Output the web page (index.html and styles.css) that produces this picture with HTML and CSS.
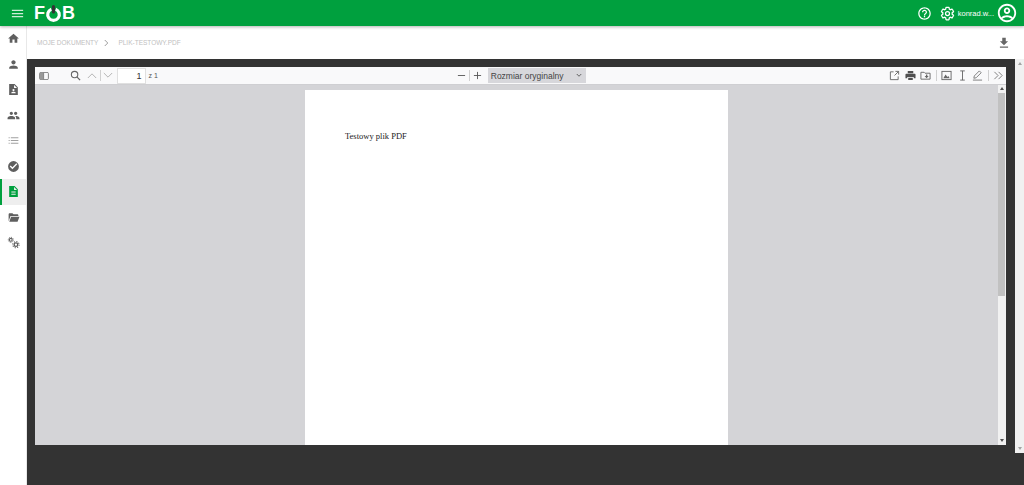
FILE: index.html
```html
<!DOCTYPE html>
<html lang="pl">
  <head>
    <meta charset="UTF-8" />
    <meta name="viewport" content="width=device-width, initial-scale=1.0" />
    <title>FOB</title>
    <link rel="stylesheet" href="styles.css">
  </head>
  <body>
    <header class="topbar">
      <div class="topbar-left">
        <svg class="menu-icon" viewBox="0 0 24 24" width="15" height="15"><path d="M3 18h18v-2H3v2zm0-5h18v-2H3v2zm0-7v2h18V6H3z"/></svg>
        <div class="logo">F<svg class="logo-o" viewBox="0 0 16 18" width="17" height="19"><path class="logo-ring" d="M6 4.9a5.5 5.5 0 1 0 4 0"/><rect class="logo-pin" x="6.5" y="1" width="3" height="8" rx="1.5"/></svg>B</div>
      </div>
      <div class="topbar-right">
        <svg viewBox="0 0 24 24" width="15" height="15"><path d="M11 18h2v-2h-2v2zm1-16C6.48 2 2 6.48 2 12s4.48 10 10 10 10-4.48 10-10S17.52 2 12 2zm0 18c-4.41 0-8-3.59-8-8s3.59-8 8-8 8 3.59 8 8-3.59 8-8 8zm0-14c-2.21 0-4 1.79-4 4h2c0-1.1.9-2 2-2s2 .9 2 2c0 2-3 1.75-3 5h2c0-2.25 3-2.5 3-5 0-2.21-1.79-4-4-4z"/></svg>
        <svg class="gear" viewBox="0 0 24 24" width="15" height="15"><path d="M19.43 12.98c.04-.32.07-.64.07-.98 0-.34-.03-.66-.07-.98l2.11-1.65c.19-.15.24-.42.12-.64l-2-3.46c-.12-.22-.39-.3-.61-.22l-2.49 1c-.52-.4-1.08-.73-1.69-.98l-.38-2.65C14.46 2.18 14.25 2 14 2h-4c-.25 0-.46.18-.49.42l-.38 2.65c-.61.25-1.17.59-1.69.98l-2.49-1c-.23-.09-.49 0-.61.22l-2 3.46c-.13.22-.07.49.12.64l2.11 1.65c-.04.32-.07.65-.07.98 0 .33.03.66.07.98l-2.11 1.65c-.19.15-.24.42-.12.64l2 3.46c.12.22.39.3.61.22l2.49-1c.52.4 1.08.73 1.69.98l.38 2.65c.03.24.24.42.49.42h4c.25 0 .46-.18.49-.42l.38-2.65c.61-.25 1.17-.59 1.69-.98l2.49 1c.23.09.49 0 .61-.22l2-3.46c.12-.22.07-.49-.12-.64l-2.11-1.65z" fill="none" stroke="#fff" stroke-width="2"/><circle cx="12" cy="12" r="3.2" fill="none" stroke="#fff" stroke-width="2"/></svg>
        <span class="user-name">konrad.w...</span>
        <svg viewBox="0 0 24 24" width="22" height="22"><path d="M12 2C6.48 2 2 6.48 2 12s4.48 10 10 10 10-4.48 10-10S17.52 2 12 2zm0 2c4.41 0 8 3.59 8 8 0 1.8-.6 3.46-1.6 4.8-1.5-1.5-4-2.3-6.4-2.3s-4.9.8-6.4 2.3A7.94 7.94 0 0 1 4 12c0-4.41 3.59-8 8-8zm0 2c-1.94 0-3.5 1.56-3.5 3.5S10.06 13 12 13s3.5-1.56 3.5-3.5S13.94 6 12 6zm0 2c.83 0 1.5.67 1.5 1.5S12.83 11 12 11s-1.5-.67-1.5-1.5S11.17 8 12 8zm0 8.5c2 0 3.9.6 5 1.8A7.96 7.96 0 0 1 12 20c-1.9 0-3.7-.7-5-1.7 1.1-1.2 3-1.8 5-1.8z"/></svg>
      </div>
    </header>

    <div class="layout">
      <nav class="sidebar">
        <a class="nav-item"><svg viewBox="0 0 24 24"><path d="M10 20v-6h4v6h5v-8h3L12 3 2 12h3v8z"/></svg></a>
        <a class="nav-item"><svg viewBox="0 0 24 24"><path d="M12 12c2.21 0 4-1.79 4-4s-1.79-4-4-4-4 1.79-4 4 1.79 4 4 4zm0 2c-2.67 0-8 1.34-8 4v2h16v-2c0-2.66-5.33-4-8-4z"/></svg></a>
        <a class="nav-item"><svg viewBox="0 0 24 24"><path fill-rule="evenodd" d="M6 2h8l6 6v14H4V2zm7 1.5V9h5.5zM12 11a2 2 0 1 0 0 4 2 2 0 0 0 0-4zm-4 8h8v-1c0-1.4-2.7-2-4-2s-4 .6-4 2z"/></svg></a>
        <a class="nav-item"><svg viewBox="0 0 24 24"><path d="M16 11c1.66 0 2.99-1.34 2.99-3S17.66 5 16 5s-3 1.34-3 3 1.34 3 3 3zm-8 0c1.66 0 2.99-1.34 2.99-3S9.66 5 8 5 5 6.34 5 8s1.34 3 3 3zm0 2c-2.33 0-7 1.17-7 3.5V19h14v-2.5C15 14.17 10.33 13 8 13zm8 0c-.29 0-.62.02-.97.05 1.16.84 1.97 1.97 1.97 3.45V19h6v-2.5c0-2.33-4.67-3.5-7-3.5z"/></svg></a>
        <a class="nav-item nav-light"><svg viewBox="0 0 24 24"><path d="M3 6h2v2H3zm4 0h14v2H7zM3 11h2v2H3zm4 0h14v2H7zM3 16h2v2H3zm4 0h14v2H7z"/></svg></a>
        <a class="nav-item"><svg viewBox="0 0 24 24"><path fill-rule="evenodd" d="M12 2a10 10 0 1 0 0 20 10 10 0 0 0 0-20zm-2 15-5-5 1.8-1.8L10 13.4l7.200-7.200L19 8z"/></svg></a>
        <a class="nav-item nav-active"><svg viewBox="0 0 24 24"><path fill-rule="evenodd" d="M6 2h8l6 6v14H4V2zm7 1.5V9h5.5zM8 12v2h8v-2zm0 4v2h8v-2z"/></svg></a>
        <a class="nav-item"><svg viewBox="0 0 24 24"><path d="M3 19V6c0-1 .8-2 2-2h5l2 2h7c1 0 2 .8 2 2v1H6.5L3 19zm1.2 1L7.5 10.5H23L19.500 20z"/></svg></a>
        <a class="nav-item"><svg class="nav-gears" viewBox="0 0 24 24"><g fill="none" stroke="#5f5f5f"><circle cx="7" cy="7" r="2.6" stroke-width="2"/><circle cx="7" cy="7" r="4.6" stroke-width="1.8" stroke-dasharray="1.8 1.8"/><circle cx="16.5" cy="16" r="3.3" stroke-width="2.4"/><circle cx="16.5" cy="16" r="5.8" stroke-width="2" stroke-dasharray="2.2 2.35"/></g></svg></a>
      </nav>

      <main class="content">
        <div class="crumbs">
          <div class="crumbs-path">
            <span>MOJE DOKUMENTY</span>
            <svg class="crumb-sep" viewBox="0 0 8 10" width="6" height="8"><path d="M1 1l4 4-4 4" fill="none" stroke="#9a9a9a" stroke-width="1.3"/></svg>
            <span>PLIK-TESTOWY.PDF</span>
          </div>
          <svg class="download" viewBox="0 0 24 24" width="14" height="14"><path d="M19 9h-4V3H9v6H5l7 7 7-7zM5 18v2h14v-2H5z"/></svg>
        </div>

        <div class="viewer-wrap">
          <div class="viewer">
            <div class="toolbar">
              <div class="tb-group">
                <svg class="tb-icon" viewBox="0 0 12 10" width="10" height="8"><rect x=".5" y=".5" width="11" height="9" rx="1.5" fill="none" stroke="#666"/><rect x="1" y="1" width="4" height="8" fill="#999"/><path d="M5.5 1v8" stroke="#666"/></svg>
                <svg class="tb-icon search" viewBox="0 0 12 12" width="11" height="11"><circle cx="5" cy="5" r="3.5" fill="none" stroke="#666" stroke-width="1.2"/><path d="M7.5 7.5l3.5 3.5" stroke="#666" stroke-width="1.4"/></svg>
                <svg class="tb-icon arrow" viewBox="0 0 12 8" width="10" height="7"><path d="M1 7l5-5 5 5" fill="none" stroke="#b5b5b5" stroke-width="1.2"/></svg>
                <span class="tb-sep"></span>
                <svg class="tb-icon" viewBox="0 0 12 8" width="10" height="7"><path d="M1 1l5 5 5-5" fill="none" stroke="#b5b5b5" stroke-width="1.2"/></svg>
                <div class="page-input">1</div>
                <span class="page-count">z 1</span>
              </div>
              <div class="tb-center">
                <svg class="tb-icon" viewBox="0 0 10 10" width="9" height="9"><path d="M1 5h8" stroke="#555" stroke-width="1"/></svg>
                <span class="tb-sep"></span>
                <svg class="tb-icon" viewBox="0 0 10 10" width="9" height="9"><path d="M1 5h8M5 1v8" stroke="#555" stroke-width="1"/></svg>
                <div class="zoom-select">
                  <span>Rozmiar oryginalny</span>
                  <svg viewBox="0 0 8 6" width="6" height="5"><path d="M1 1l3 3 3-3" fill="none" stroke="#555" stroke-width="1.2"/></svg>
                </div>
              </div>
              <div class="tb-group tb-right">
                <svg class="tb-icon" viewBox="0 0 12 12" width="11" height="11"><path d="M5 2H1.5v8.5H10V7M7 1.5h3.5V5M10.500 1.500L6 6" fill="none" stroke="#666" stroke-width="1"/></svg>
                <svg class="tb-icon" viewBox="0 0 12 12" width="11" height="11"><path fill="#505050" d="M3 1h6v2.5H3zM1.5 4h9c.5 0 1 .5 1 1v4H9.5V7.5h-7V9H.5V5c0-.5.5-1 1-1zM3.500 8.500h5V11h-5z"/></svg>
                <svg class="tb-icon" viewBox="0 0 12 12" width="11" height="11"><path fill="none" stroke="#666" stroke-width="1" d="M1 2.5h3.5l1 1H11v6.500H1z"/><path fill="#666" d="M6.5 5h1.5v1.5h1.5L7.200 9 5 6.500h1.500z"/></svg>
                <span class="tb-sep"></span>
                <svg class="tb-icon" viewBox="0 0 12 12" width="11" height="11"><rect x="1" y="1.5" width="10" height="9" fill="none" stroke="#666" stroke-width="1"/><path fill="#666" d="M2.5 9l2.5-4 2 2.5L8 6.5 9.5 9z"/></svg>
                <svg class="tb-icon" viewBox="0 0 12 12" width="11" height="11"><path d="M3.5 1h5M3.5 11h5M6 1v10" fill="none" stroke="#666" stroke-width="1"/></svg>
                <svg class="tb-icon" viewBox="0 0 12 12" width="11" height="11"><path d="M2 9l.5-2.500L8 1l2 2-5.500 5.500zM1 11h10" fill="none" stroke="#777" stroke-width="1"/></svg>
                <span class="tb-sep"></span>
                <svg class="tb-icon" viewBox="0 0 12 12" width="11" height="11"><path d="M1.5 2l4 4-4 4M6 2l4 4-4 4" fill="none" stroke="#777" stroke-width="1"/></svg>
              </div>
            </div>
            <div class="pdf-area">
              <div class="pdf-pages">
                <div class="pdf-page">Testowy plik PDF</div>
              </div>
              <div class="scrollbar inner-scroll">
                <span class="sb-up"></span>
                <span class="sb-thumb"></span>
                <span class="sb-down"></span>
              </div>
            </div>
          </div>
          <div class="scrollbar outer-scroll">
            <span class="sb-up"></span>
            <span class="sb-thumb"></span>
            <span class="sb-down"></span>
          </div>
        </div>
      </main>
    </div>
  </body>
</html>
```

FILE: styles.css
```css
* {
  box-sizing: border-box;
}

html,
body {
  height: 100%;
}

body {
  margin: 0;
  display: flex;
  flex-direction: column;
  overflow: hidden;
  font-family: "Liberation Sans", sans-serif;
  background-color: #fff;
}

.topbar {
  height: 26px;
  flex-shrink: 0;
  display: flex;
  justify-content: space-between;
  align-items: center;
  padding: 0 6px 0 10px;
  background-color: #00a03e;
  box-shadow: 0 1px 3px rgba(0, 0, 0, 0.3);
  position: relative;
  z-index: 2;
}

.topbar svg {
  fill: #fff;
  display: block;
}

.topbar-left {
  display: flex;
  align-items: center;
}

.menu-icon {
  opacity: 0.8;
}

.logo {
  display: flex;
  align-items: center;
  margin-left: 9px;
  color: #fff;
  font-size: 18px;
  font-weight: bold;
  line-height: 1;
}

.logo-ring {
  fill: none;
  stroke: #fff;
  stroke-width: 3;
}

.logo-pin {
  fill: #333;
}

.topbar-right {
  display: flex;
  align-items: center;
}

.gear {
  margin-left: 7.5px;
}

.user-name {
  margin: 0 2px 0 3px;
  color: #fff;
  font-size: 7.5px;
}

.layout {
  flex: 1;
  display: flex;
  min-height: 0;
}

.sidebar {
  width: 27px;
  flex-shrink: 0;
  background-color: #fff;
  border-right: 1px solid #e8e8e8;
}

.nav-item {
  height: 25.5px;
  display: flex;
  align-items: center;
  justify-content: center;
}

.nav-item svg {
  width: 13px;
  height: 13px;
  fill: #5f5f5f;
}

.nav-light svg {
  fill: #a0a0a0;
}

.nav-active {
  background-color: #eeeeee;
  border-left: 2px solid #00a03e;
  padding-right: 2px;
}

.nav-active svg {
  fill: #00a03e;
}

.content {
  flex: 1;
  min-width: 0;
  display: flex;
  flex-direction: column;
}

.crumbs {
  height: 33px;
  flex-shrink: 0;
  display: flex;
  justify-content: space-between;
  align-items: center;
  padding: 0 13px 0 10px;
  font-size: 6.5px;
  color: #c0c0c0;
}

.crumbs-path {
  display: flex;
  align-items: center;
}

.crumb-sep {
  margin: 0 8px 0 6px;
}

.download {
  fill: #666;
}

.viewer-wrap {
  flex: 1;
  min-height: 0;
  display: flex;
  align-items: flex-start;
  padding-left: 8px;
  background-color: #333333;
}

.viewer {
  width: 971px;
  height: 378px;
  margin-top: 8px;
  display: flex;
  flex-direction: column;
  background-color: #d4d4d7;
}

.toolbar {
  height: 17px;
  flex-shrink: 0;
  display: grid;
  grid-template-columns: 1fr auto 1fr;
  align-items: center;
  padding: 0 2px 0 4px;
  background-color: #f9f9fa;
  box-shadow: 0 1px 0 #cfcfd2;
  position: relative;
}

.tb-group,
.tb-center {
  display: flex;
  align-items: center;
}

.tb-right {
  justify-content: flex-end;
  gap: 4.5px;
}

.tb-icon {
  display: block;
  flex-shrink: 0;
}

.search {
  margin-left: 21px;
}

.arrow {
  margin-left: 6px;
}

.tb-sep {
  width: 1px;
  height: 11px;
  margin: 0 3px;
  background-color: #d0d0d0;
  flex-shrink: 0;
}

.arrow + .tb-sep {
  margin-right: 2px;
}

.tb-right .tb-sep {
  margin: 0;
}

.page-input {
  width: 29px;
  height: 16px;
  margin-left: 3.5px;
  padding-right: 3px;
  border: 1px solid #e0e0e0;
  background-color: #fff;
  text-align: right;
  font-size: 9px;
  line-height: 14px;
  color: #333;
}

.page-count {
  margin-left: 3px;
  font-size: 7px;
  color: #555;
}

.zoom-select {
  width: 98px;
  height: 15px;
  margin-left: 5.5px;
  padding: 0 4px 0 3px;
  display: flex;
  justify-content: space-between;
  align-items: center;
  background-color: #d7d7db;
  font-size: 8.5px;
  color: #444;
}

.pdf-area {
  flex: 1;
  min-height: 0;
  display: flex;
}

.pdf-pages {
  flex: 1;
  display: flex;
  justify-content: center;
  overflow: hidden;
  padding-top: 6px;
}

.pdf-page {
  width: 423px;
  height: 600px;
  padding: 41px 40px;
  background-color: #fff;
  font-family: "Liberation Serif", serif;
  font-size: 8.5px;
  color: #222;
}

.scrollbar {
  width: 8px;
  display: flex;
  flex-direction: column;
  background-color: #f1f1f1;
}

.sb-up,
.sb-down {
  height: 9px;
  flex-shrink: 0;
  display: flex;
  align-items: center;
  justify-content: center;
}

.sb-up::before {
  content: "";
  border: 2px solid transparent;
  border-top: 0;
  border-bottom: 3px solid #505050;
}

.sb-down::before {
  content: "";
  border: 2px solid transparent;
  border-bottom: 0;
  border-top: 3px solid #505050;
}

.sb-thumb {
  flex: 1;
}

.inner-scroll .sb-thumb {
  flex: 0 0 203px;
  margin-right: 1px;
  background-color: #c1c1c1;
}

.inner-scroll .sb-down {
  margin-top: auto;
}

.outer-scroll {
  width: 9px;
  height: 394px;
  margin-left: auto;
}

.outer-scroll .sb-up::before {
  border-bottom-color: #a3a3a3;
}

.outer-scroll .sb-down::before {
  border-top-color: #a3a3a3;
}
```
